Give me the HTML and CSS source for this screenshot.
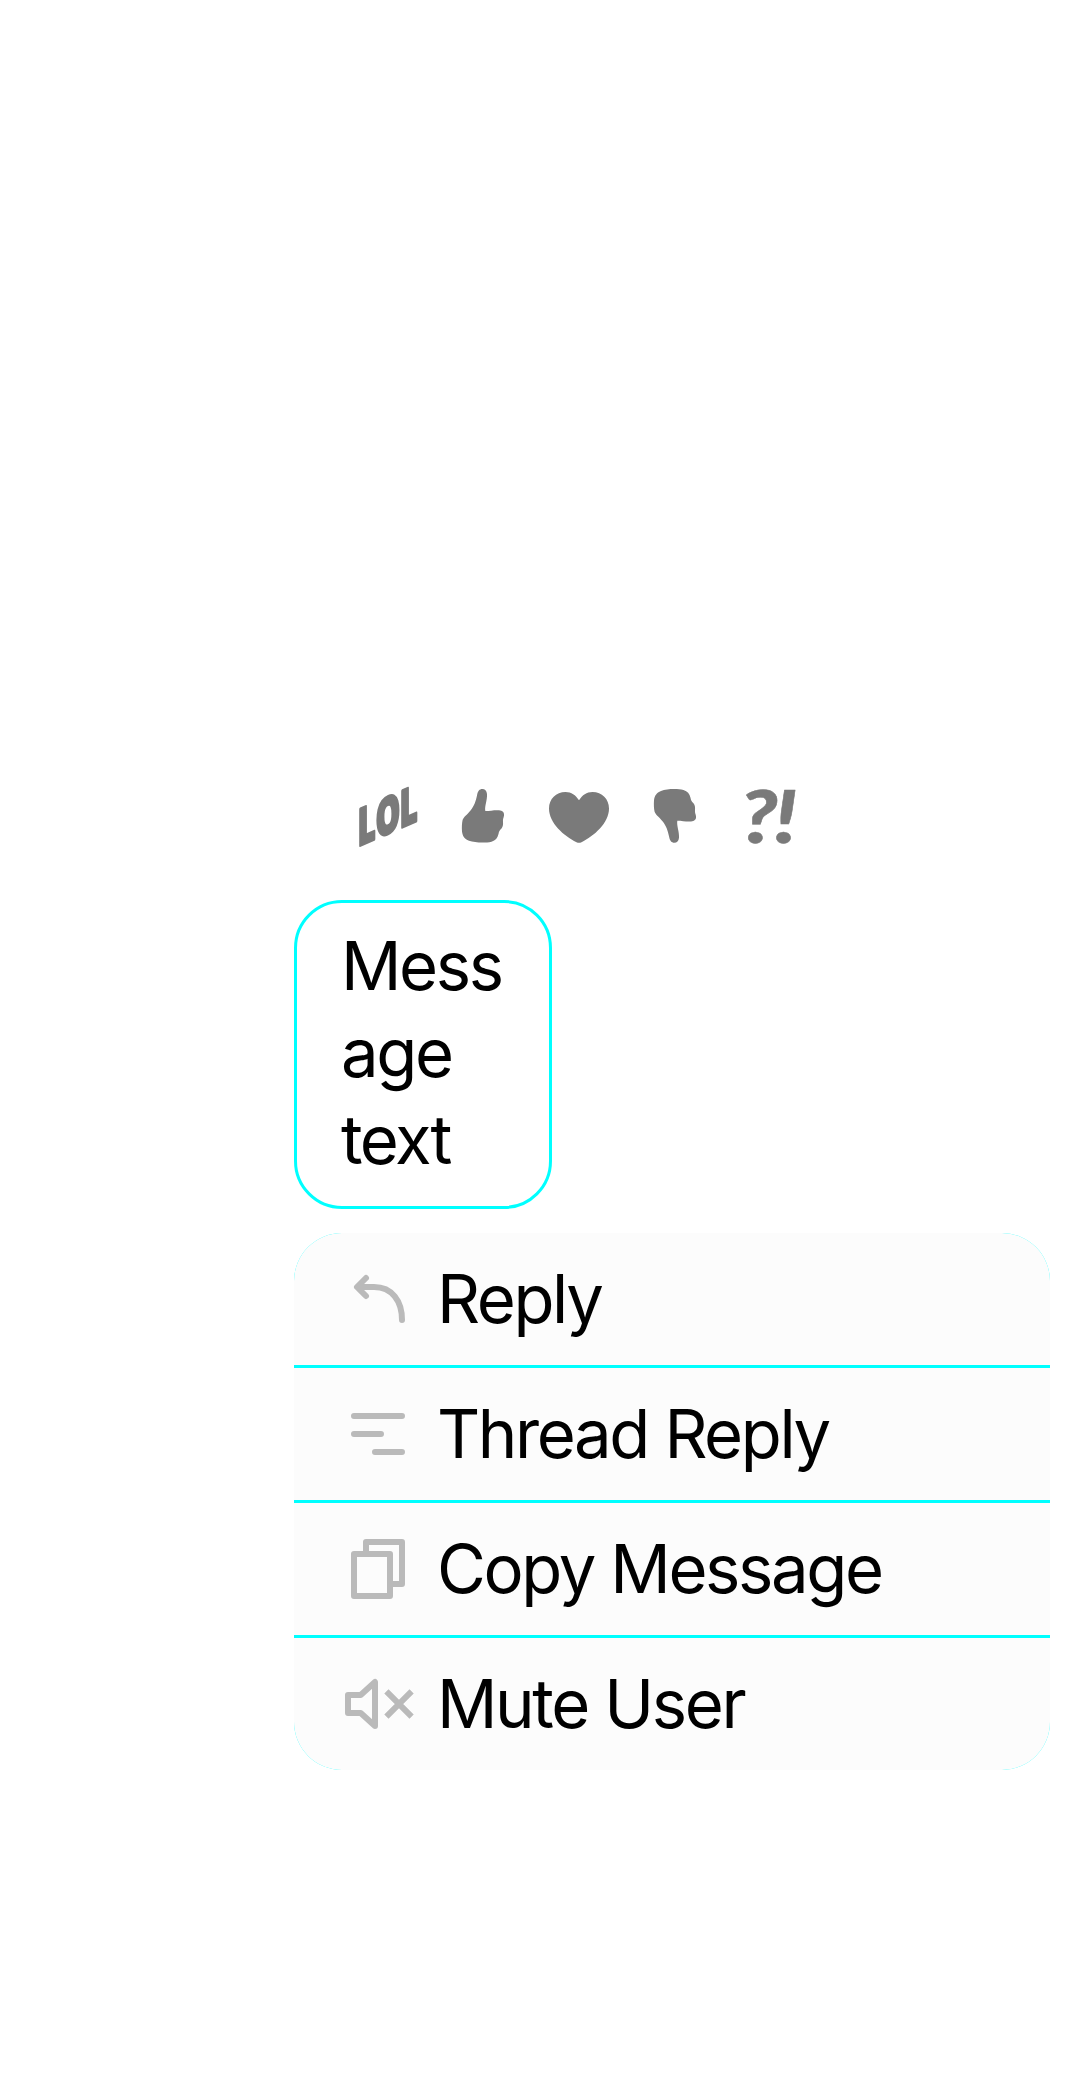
FILE: index.html
```html
<!DOCTYPE html>
<html lang="en">
<head>
<meta charset="utf-8">
<title>Message actions</title>
<link rel="stylesheet" href="styles.css">
</head>
<body>
<main class="overlay">
  <div class="reactions">
    <svg class="reaction" viewBox="0 0 72 72"><text class="lol" transform="matrix(.6 -.26 0 1 6.800 66.500)" x="0 30 70" y="0">LOL</text></svg>
    <svg class="reaction" viewBox="0 0 72 72"><path d="M35.3 9C38 9 39.6 10.500 40 14C40.400 20 37.500 26 38.300 31C43 31 47 30 52 30.300C55.500 30.600 57.500 32.500 57 35.500C56.600 38 55.700 39 56 42C56.200 44.500 56 46.500 54.500 48.500C52.500 50.500 52 51.500 51.500 54C50.500 58 48.500 60.500 44.500 61.700C38 63.200 28 62.800 22 60.800C17.500 59 15.500 56 15 51.500C14.700 47 14.900 43 15.600 40C16.500 37 20 35 23.500 30.500C27.500 25.500 28.800 21 30 15.500C30.800 11 32.500 9 35.300 9Z"/></svg>
    <svg class="reaction" viewBox="0 0 72 72"><path d="M36 20.300C32.500 15 28.500 12 22.500 12C13 12 6 19 6 28.500C6 43 21 56 33.500 62.200Q36 63.300 38.500 62.200C51 56 66 43 66 28.500C66 19 59 12 49.500 12C43.500 12 39.500 15 36 20.300Z"/></svg>
    <svg class="reaction" viewBox="0 0 72 72"><path transform="matrix(1 0 0 -1 0 71.700)" d="M35.3 9C38 9 39.6 10.500 40 14C40.400 20 37.500 26 38.300 31C43 31 47 30 52 30.300C55.500 30.600 57.500 32.500 57 35.500C56.600 38 55.700 39 56 42C56.200 44.500 56 46.500 54.500 48.500C52.500 50.500 52 51.500 51.500 54C50.500 58 48.500 60.500 44.500 61.700C38 63.200 28 62.800 22 60.800C17.500 59 15.500 56 15 51.500C14.700 47 14.900 43 15.600 40C16.500 37 20 35 23.500 30.500C27.500 25.500 28.800 21 30 15.500C30.800 11 32.500 9 35.300 9Z"/></svg>
    <svg class="reaction" viewBox="0 0 72 72"><text class="wow" transform="matrix(1.180 0 0 1 5 62.500)" x="0 28.800" y="0">?!</text></svg>
  </div>

  <div class="bubble">Message text</div>

  <div class="menu">
    <div class="item">
      <svg class="icon round" viewBox="0 0 72 72"><path d="M24 15L15 24L24 33M16 24H32C50 24 60 38 60 57"/></svg>
      <span class="label">Reply</span>
    </div>
    <div class="item">
      <svg class="icon round" viewBox="0 0 72 72"><path d="M12 18H60M12 36H39M33 54H60"/></svg>
      <span class="label">Thread Reply</span>
    </div>
    <div class="item">
      <svg class="icon" viewBox="0 0 72 72"><path d="M12 21H48V63H12ZM24 18V9H60V51H51"/></svg>
      <span class="label">Copy Message</span>
    </div>
    <div class="item">
      <svg class="icon" viewBox="0 0 72 72"><path d="M6 27H18.700L33 14V58L18.700 45H6ZM44.400 23.400L69.600 48.600M69.600 23.400L44.400 48.600"/></svg>
      <span class="label">Mute User</span>
    </div>
  </div>
</main>
</body>
</html>
```
FILE: styles.css
```css
* { box-sizing: border-box; }

body {
  margin: 0;
  min-height: 2100px;
  background: #fff;
  color: #000;
  font: 400 67px/87px Inter, "Liberation Sans", sans-serif;
  font-variation-settings: "opsz" 32;
  letter-spacing: -2.4px;
}

.overlay {
  display: flex;
  flex-direction: column;
  align-items: flex-start;
  width: 1050px;
  padding: 780px 0 0 294px;
}

.reactions {
  display: flex;
  gap: 24px;
  margin: 0 0 48px 57px;
}

.reaction {
  display: block;
  width: 72px;
  height: 72px;
  overflow: visible;
  fill: #7a7a7a;
  will-change: transform;
}

.lol,
.wow {
  letter-spacing: 0;
  stroke: #7a7a7a;
  stroke-linejoin: round;
}

.lol {
  font: 800 51px "Open Sans", sans-serif;
  stroke-width: 3px;
}

.wow {
  font: italic 900 73px Lato, sans-serif;
  stroke-width: 0.5px;
}

.bubble {
  width: 258px;
  padding: 19px 40px 23px 44px;
  border: 3px solid #0ff;
  border-radius: 48px;
  overflow-wrap: anywhere;
}

.menu {
  display: flex;
  flex-direction: column;
  gap: 3px;
  width: 756px;
  margin-top: 24px;
  border-radius: 48px;
  background: #0ff;
  overflow: hidden;
}

.item {
  display: flex;
  align-items: center;
  gap: 23px;
  height: 132px;
  padding-left: 48px;
  background: #fcfcfc;
}

.label { padding-bottom: 2px; }

.icon {
  width: 72px;
  height: 72px;
  fill: none;
  stroke: #bababa;
  stroke-width: 6;
  stroke-linejoin: round;
}

.round { stroke-linecap: round; }
```
